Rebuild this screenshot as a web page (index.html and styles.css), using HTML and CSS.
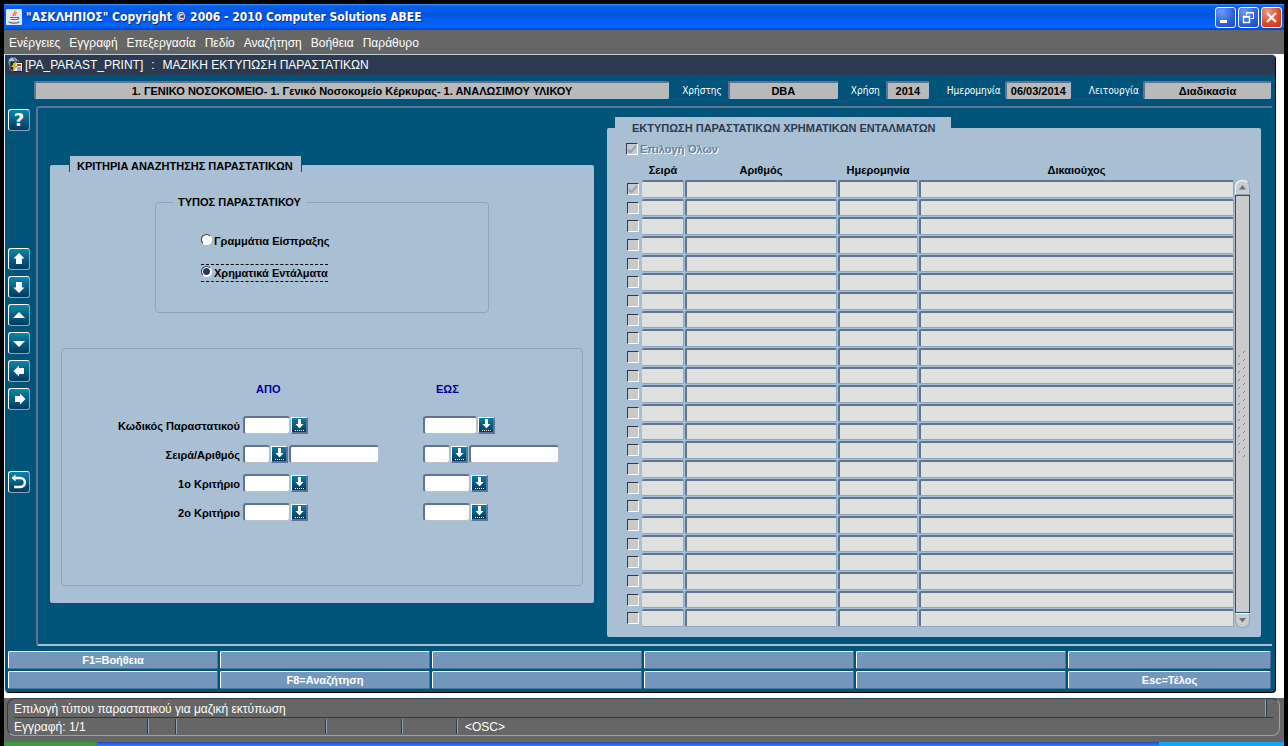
FILE: index.html
```
<!DOCTYPE html>
<html lang="el">
  <head>
    <meta charset="UTF-8" />
    <meta name="viewport" content="width=device-width, initial-scale=1.0" />
    <title>"ΑΣΚΛΗΠΙΟΣ"</title>
    <link rel="stylesheet" href="styles.css" />
  </head>
  <body>
    <div class="window">
      <header class="titlebar">
        <svg class="java" viewBox="0 0 16 16" width="16" height="16">
          <rect width="16" height="16" rx="1" fill="#e4e9ee" />
          <path d="M9 1.500c1 2-3 3-1.500 5.500M11 3.500c-2 1-2.500 2-1.500 3.500" fill="none" stroke="#e8772e" stroke-width="1.300" />
          <path d="M4 8.500h7M4.500 10.500h6M11 8.500c2.500-.5 2 2-.5 2" fill="none" stroke="#4c6f93" stroke-width="1.200" />
          <path d="M2.500 13c3 1.300 8 1.300 11 0" fill="none" stroke="#4c6f93" stroke-width="1.200" />
        </svg>
        <h1>"ΑΣΚΛΗΠΙΟΣ" Copyright © 2006 - 2010 Computer Solutions ABEE</h1>
        <div class="win-buttons">
          <button type="button" aria-label="Ελαχιστοποίηση">
            <svg viewBox="0 0 19 19"><path d="M4 12h7v3H4z" fill="#fff" /></svg>
          </button>
          <button type="button" aria-label="Επαναφορά">
            <svg viewBox="0 0 19 19">
              <path d="M7.500 7V4.500h7v6H12M7 5h8" fill="none" stroke="#fff" />
              <path d="M4.500 8.500h6v6h-6zM4 9h7" fill="none" stroke="#fff" stroke-width="1.400" />
            </svg>
          </button>
          <button type="button" class="close" aria-label="Κλείσιμο">
            <svg viewBox="0 0 19 19"><path d="M5 5l9 9M14 5l-9 9" stroke="#fff" stroke-width="2.200" /></svg>
          </button>
        </div>
      </header>

      <nav class="menu">
        <button type="button">Ενέργειες</button>
        <button type="button">Εγγραφή</button>
        <button type="button">Επεξεργασία</button>
        <button type="button">Πεδίο</button>
        <button type="button">Αναζήτηση</button>
        <button type="button">Βοήθεια</button>
        <button type="button">Παράθυρο</button>
      </nav>

      <div class="desktop">
        <div class="form">
          <div class="form-title">
            <svg viewBox="0 0 16 16" width="16" height="16">
              <circle cx="6" cy="5" r="5" fill="#4a6cc0" />
              <path d="M2 3l3-2 2 2-2 3zM7 1l3 2" fill="#9fc4d8" stroke="#9fc4d8" />
              <path d="M3 4h9v9H3z" fill="#1b2430" stroke="#c9d2dc" stroke-width=".5" />
              <path d="M5.500 5.500h10v9h-10z" fill="#f4f0e4" stroke="#222" />
              <path d="M10 7h4v2h-4z" fill="#c33" />
              <path d="M10 11h4M10 13h4" stroke="#3550b8" />
              <path d="M8 5l-4 5h3l-2 5 5-6H7l3-4z" fill="#f6d53a" stroke="#6b5a10" stroke-width=".5" />
            </svg>
            <span>[PA_PARAST_PRINT]</span>
            <span>:</span>
            <span>ΜΑΖΙΚΗ ΕΚΤΥΠΩΣΗ ΠΑΡΑΣΤΑΤΙΚΩΝ</span>
          </div>

          <div class="info">
            <input class="info-unit" type="text" readonly aria-label="Μονάδα" value="1. ΓΕΝΙΚΟ ΝΟΣΟΚΟΜΕΙΟ- 1. Γενικό Νοσοκομείο Κέρκυρας- 1. ΑΝΑΛΩΣΙΜΟΥ ΥΛΙΚΟΥ" />
            <label for="user">Χρήστης</label>
            <input class="info-user" id="user" type="text" readonly value="DBA" />
            <label for="year">Χρήση</label>
            <input class="info-year" id="year" type="text" readonly value="2014" />
            <label class="spaced" for="date">Ημερομηνία</label>
            <input class="info-date" id="date" type="text" readonly value="06/03/2014" />
            <label class="spaced" for="mode">Λειτουργία</label>
            <input class="info-mode" id="mode" type="text" readonly value="Διαδικασία" />
          </div>

          <div class="workspace">
            <div class="tools">
              <button type="button" class="tool help">?</button>
              <div class="tool-group">
                <button type="button" class="tool" aria-label="Πρώτη"><svg viewBox="0 0 18 18"><path d="M9 3l5.500 5.500H12V14H6V8.500H3.500z" /></svg></button>
                <button type="button" class="tool" aria-label="Τελευταία"><svg viewBox="0 0 18 18"><path d="M9 15L3.500 9.500H6V4h6v5.500h2.500z" /></svg></button>
                <button type="button" class="tool" aria-label="Προηγούμενη"><svg viewBox="0 0 18 18"><path d="M9 6l6 6H3z" /></svg></button>
                <button type="button" class="tool" aria-label="Επόμενη"><svg viewBox="0 0 18 18"><path d="M9 13L3 7h12z" /></svg></button>
                <button type="button" class="tool" aria-label="Αριστερά"><svg viewBox="0 0 18 18"><path d="M3.500 9L9 3.500V6h5v6H9v2.500z" /></svg></button>
                <button type="button" class="tool" aria-label="Δεξιά"><svg viewBox="0 0 18 18"><path d="M15.500 9L10 3.500V6H5v6h5v2.500z" /></svg></button>
              </div>
              <button type="button" class="tool" aria-label="Επιστροφή">
                <svg viewBox="0 0 18 18">
                  <path d="M1.500 5l4-3.500v7z" />
                  <path d="M4 5h6c6.500 0 6.500 9 0 9H4" fill="none" stroke="#fff" stroke-width="2.400" />
                </svg>
              </button>
            </div>

            <main class="canvas">
              <section class="panel criteria">
                <h2 class="tab">ΚΡΙΤΗΡΙΑ ΑΝΑΖΗΤΗΣΗΣ ΠΑΡΑΣΤΑΤΙΚΩΝ</h2>

                <fieldset class="doc-type">
                  <legend>ΤΥΠΟΣ ΠΑΡΑΣΤΑΤΙΚΟΥ</legend>
                  <label class="option"><input type="radio" name="doc" />Γραμμάτια Είσπραξης</label>
                  <label class="option selected"><input type="radio" name="doc" checked />Χρηματικά Εντάλματα</label>
                </fieldset>

                <div class="range">
                  <span></span>
                  <span class="range-head">ΑΠΟ</span>
                  <span class="range-head">ΕΩΣ</span>

                  <label for="code-from">Κωδικός Παραστατικού</label>
                  <div class="pair"><input id="code-from" class="field" type="text" /><button type="button" class="lov" aria-label="Λίστα"></button></div>
                  <div class="pair"><input class="field wide" type="text" aria-label="Κωδικός έως" /><button type="button" class="lov" aria-label="Λίστα"></button></div>

                  <label for="series-from">Σειρά/Αριθμός</label>
                  <div class="pair">
                    <input id="series-from" class="field short" type="text" /><button type="button" class="lov" aria-label="Λίστα"></button><input class="field long" type="text" aria-label="Αριθμός από" />
                  </div>
                  <div class="pair">
                    <input class="field short" type="text" aria-label="Σειρά έως" /><button type="button" class="lov" aria-label="Λίστα"></button><input class="field long" type="text" aria-label="Αριθμός έως" />
                  </div>

                  <label for="crit1-from">1ο Κριτήριο</label>
                  <div class="pair"><input id="crit1-from" class="field" type="text" /><button type="button" class="lov" aria-label="Λίστα"></button></div>
                  <div class="pair"><input class="field" type="text" aria-label="1ο Κριτήριο έως" /><button type="button" class="lov" aria-label="Λίστα"></button></div>

                  <label for="crit2-from">2ο Κριτήριο</label>
                  <div class="pair"><input id="crit2-from" class="field" type="text" /><button type="button" class="lov" aria-label="Λίστα"></button></div>
                  <div class="pair"><input class="field" type="text" aria-label="2ο Κριτήριο έως" /><button type="button" class="lov" aria-label="Λίστα"></button></div>
                </div>
              </section>

              <section class="panel results">
                <h2 class="tab">ΕΚΤΥΠΩΣΗ ΠΑΡΑΣΤΑΤΙΚΩΝ ΧΡΗΜΑΤΙΚΩΝ ΕΝΤΑΛΜΑΤΩΝ</h2>
                <label class="select-all"><input class="check" type="checkbox" checked disabled />Επιλογή Όλων</label>
                <div class="grid">
                  <table>
                    <thead>
                      <tr>
                        <th class="c-check"></th>
                        <th class="c-series">Σειρά</th>
                        <th class="c-number">Αριθμός</th>
                        <th class="c-date">Ημερομηνία</th>
                        <th>Δικαιούχος</th>
                      </tr>
                    </thead>
                    <tbody id="rows"></tbody>
                  </table>
                  <div class="scroll">
                    <button type="button" class="scroll-up" aria-label="Πάνω"><svg viewBox="0 0 8 5"><path d="M4 0l4 5H0z" /></svg></button>
                    <div class="scroll-track">
                      <svg width="9" height="108">
                        <defs>
                          <pattern id="grip" width="9" height="8" patternUnits="userSpaceOnUse">
                            <path d="M0 7l2-2M5 3l2-2" stroke="#71849c" />
                          </pattern>
                        </defs>
                        <rect width="9" height="108" fill="url(#grip)" />
                      </svg>
                    </div>
                    <button type="button" class="scroll-down" aria-label="Κάτω"><svg viewBox="0 0 8 5"><path d="M4 5L0 0h8z" /></svg></button>
                  </div>
                </div>
              </section>
            </main>
          </div>

          <div class="keys">
            <button type="button">F1=Βοήθεια</button>
            <button type="button"></button>
            <button type="button"></button>
            <button type="button"></button>
            <button type="button"></button>
            <button type="button"></button>
            <button type="button"></button>
            <button type="button">F8=Αναζήτηση</button>
            <button type="button"></button>
            <button type="button"></button>
            <button type="button"></button>
            <button type="button">Esc=Τέλος</button>
          </div>
        </div>
      </div>

      <footer class="status">
        <div class="status-box">
          <div class="status-message"><span>Επιλογή τύπου παραστατικού για μαζική εκτύπωση</span></div>
          <div class="status-cells">
            <span class="cell-record">Εγγραφή: 1/1</span>
            <span class="cell-a"></span>
            <span class="cell-b"></span>
            <span class="cell-c"></span>
            <span class="cell-d"></span>
            <span class="cell-osc">&lt;OSC&gt;</span>
          </div>
        </div>
      </footer>
      <div class="taskbar"><span class="start"></span><span class="tray"></span></div>
    </div>

    <script>
      const ROWS = 24;
      const rows = document.getElementById("rows");
      for (let i = 1; i <= ROWS; i++) {
        const tr = document.createElement("tr");
        tr.innerHTML = `
          <td class="c-check"><input class="check" type="checkbox" disabled aria-label="Επιλογή ${i}" ${i === 1 ? "checked" : ""} /></td>
          <td><input type="text" disabled aria-label="Σειρά ${i}" /></td>
          <td><input type="text" disabled aria-label="Αριθμός ${i}" /></td>
          <td><input type="text" disabled aria-label="Ημερομηνία ${i}" /></td>
          <td><input type="text" disabled aria-label="Δικαιούχος ${i}" /></td>`;
        rows.appendChild(tr);
      }
      // arrow on a dotted line, same for every list button
      document.querySelectorAll(".lov").forEach((b) => {
        b.innerHTML = `<svg viewBox="0 0 14 14"><path d="M6 1h3v5h2.500l-4 4.500-4-4.500H6z" fill="#fff"/><path d="M3 12.500h9" stroke="#fff" stroke-dasharray="1 1"/></svg>`;
      });
    </script>
  </body>
</html>
```
FILE: styles.css
```
* {
  margin: 0;
  padding: 0;
  box-sizing: border-box;
}
:root {
  --teal: #005379;
  --panel: #a9bfd3;
  --line: #5f7492;
  --edge: #8fa5be;
  --navy: #2b3a50;
  --grey: #666666;
}
body {
  background: #000;
  font-family: "Liberation Sans", Arial, sans-serif;
  font-size: 11px;
}
input,
button {
  font: inherit;
}
button {
  border: none;
  cursor: pointer;
}
svg {
  display: block;
}
.window {
  min-height: 100vh;
  padding: 4px 4px 0;
  display: flex;
  flex-direction: column;
}

/* title bar */
.titlebar {
  height: 26px;
  padding: 0 2px;
  display: flex;
  align-items: center;
  gap: 4px;
  background: linear-gradient(#3c8cf5 0, #0a5fe8 8%, #0054e3 40%, #0066ff 85%, #0046c8 100%);
}
.titlebar h1 {
  flex: 1;
  font: bold 12px "DejaVu Sans Condensed", sans-serif;
  color: #fff;
  text-shadow: 1px 1px 0 #0a2f86;
}
.win-buttons {
  display: flex;
  gap: 2px;
}
.win-buttons button {
  width: 21px;
  height: 21px;
  border: 1px solid #fff;
  border-radius: 3px;
  background: radial-gradient(circle at 30% 20%, #6f9bf2, #2a5fdd 60%, #1c4cc4);
}
.win-buttons .close {
  background: radial-gradient(circle at 30% 20%, #ee9a82, #dc5030 55%, #b8330f);
}

/* menu */
.menu {
  height: 24px;
  padding: 2px 5px 0;
  display: flex;
  align-items: center;
  gap: 9px;
  background: var(--grey);
}
.menu button {
  background: none;
  color: #fff;
  font-size: 12px;
}

/* form window */
.desktop {
  flex: 1;
  display: flex;
  padding: 0 9px 6px 0;
  background: #fff;
}
.form {
  flex: 1;
  min-width: 0;
  display: flex;
  flex-direction: column;
  background: var(--teal);
  border-top: 1px solid #c3cdd6;
  border-left: 1px solid #dfe8ee;
  border-radius: 0 4px 4px 4px;
  box-shadow: 1px 1px 0 #000;
}
.form-title {
  height: 20px;
  padding-left: 2px;
  display: flex;
  align-items: center;
  background: var(--navy);
  border-radius: 0 4px 0 0;
  color: #fff;
  font-size: 12px;
}
.form-title span {
  margin-right: 8px;
}
.form-title svg {
  margin-right: 2px;
}
.info {
  display: flex;
  align-items: center;
  padding: 6px 4px 7px 29px;
}
.info label {
  margin-left: 13px;
  margin-right: 6px;
  color: #fff;
  font: 10px "DejaVu Sans Condensed", sans-serif;
}
.info .spaced {
  margin-left: 18px;
  margin-right: 4px;
}
.info input {
  height: 18px;
  border: 2px solid var(--line);
  border-right: 1px solid var(--panel);
  border-bottom: 1px solid var(--panel);
  border-radius: 2px;
  background: #b9b9b9;
  color: #000;
  font-weight: bold;
  text-align: center;
  min-width: 0;
}
.info-unit {
  flex: 1;
}
.info-user {
  width: 110px;
}
.info-year {
  width: 43px;
}
.info-date {
  width: 66px;
}
.info-mode {
  width: 128px;
}
.workspace {
  flex: 1;
  display: flex;
}

/* left toolbar */
.tools {
  width: 31px;
  padding: 3px 0 0 3px;
}
.tool-group {
  display: flex;
  flex-direction: column;
  gap: 6px;
  margin: 117px 0 61px;
}
.tool {
  display: block;
  width: 22px;
  height: 22px;
  padding: 1px;
  border: 1px solid #fff;
  border-right-color: var(--edge);
  border-bottom-color: var(--edge);
  border-radius: 3px;
  background: linear-gradient(#0b86a8, #00395f);
  color: #fff;
}
.tool svg {
  fill: #fff;
}
.help {
  font: bold 18px/18px "DejaVu Sans", sans-serif;
}

.canvas {
  flex: 1;
  min-width: 0;
  margin-right: 3px;
  padding-right: 11px;
  display: flex;
  gap: 13px;
  border: 2px solid var(--line);
  border-right: none;
  border-bottom-color: var(--panel);
  border-radius: 3px 0 0 3px;
}
.panel {
  background: var(--panel);
  border-radius: 2px;
}
.tab {
  background: var(--panel);
  font-size: 11px;
}

/* criteria */
.criteria {
  flex: 544 1 0;
  margin: 57px 0 41px 12px;
  display: flex;
  flex-direction: column;
}
.criteria .tab {
  align-self: flex-start;
  height: 16px;
  margin: -9px 0 0 19px;
  padding: 0 8px 0 7px;
  line-height: 21px;
  border: solid var(--teal);
  border-width: 0 1px;
}
.doc-type {
  height: 117px;
  margin: 24px 105px 0;
  padding: 23px 0 0 45px;
  border: 1px solid var(--edge);
  border-radius: 4px;
}
.doc-type legend {
  margin-left: -28px;
  padding: 0 5px;
  line-height: 13px;
  font-weight: bold;
}
.option {
  display: flex;
  align-items: center;
  gap: 2px;
  width: max-content;
  height: 18px;
  margin-bottom: 14px;
  font-weight: bold;
}
.option input {
  width: 11px;
  height: 11px;
  margin-bottom: 3px;
  appearance: none;
  border: 1px solid #fff;
  border-top-color: var(--navy);
  border-left-color: var(--navy);
  border-radius: 50%;
  background: #fff;
}
.option input:checked {
  background: radial-gradient(circle, var(--navy) 3px, #fff 4px);
}
.selected {
  border: dashed #000;
  border-width: 1px 0;
}
.range {
  flex: 1;
  margin: 35px 11px 17px;
  padding-top: 34px;
  display: grid;
  grid-template-columns: 178px 177px 1fr;
  grid-template-rows: 22px;
  grid-auto-rows: 18px;
  align-content: start;
  gap: 11px 3px;
  border: 1px solid var(--edge);
  border-radius: 4px;
}
.range label {
  line-height: 20px;
  text-align: right;
  font-weight: bold;
}
.range-head {
  padding-left: 13px;
  color: #0000a0;
  font-weight: bold;
}
.pair {
  display: flex;
  gap: 1px;
}
.field {
  width: 47px;
  height: 18px;
  border: 2px solid var(--line);
  border-right: 1px solid #b9c2cc;
  border-bottom: 1px solid #b9c2cc;
  border-radius: 3px;
  background: #fff;
}
.short {
  width: 27px;
}
.wide {
  width: 54px;
}
.long {
  width: 90px;
}
.lov {
  width: 17px;
  height: 17px;
  margin-top: 1px;
  border: 1px solid #fff;
  border-right: 2px solid var(--line);
  border-bottom: 2px solid var(--line);
  background: linear-gradient(#0b7fa2, #00395f);
}

/* results */
.results {
  flex: 624 1 0;
  align-self: flex-start;
  margin: 20px 0 7px;
  padding: 0 11px 9px 19px;
}
.results .tab {
  width: max-content;
  height: 18px;
  margin: -11px 0 0 -11px;
  padding: 0 16px 0 17px;
  line-height: 22px;
  color: var(--navy);
}
.select-all {
  display: flex;
  align-items: center;
  gap: 2px;
  height: 16px;
  margin-top: 6px;
  color: #6b7f9a;
  font-weight: bold;
  text-shadow: 1px 1px 0 #fff;
}
.check {
  display: block;
  width: 12px;
  height: 12px;
  appearance: none;
  border: 1px solid #fff;
  border-top-color: var(--navy);
  border-left-color: var(--navy);
  background: #c9c9c9;
}
.check:checked::before {
  content: "";
  display: block;
  width: 10px;
  height: 10px;
  background: var(--edge);
  clip-path: polygon(10% 45%, 35% 65%, 90% 5%, 90% 35%, 35% 95%, 10% 75%);
}
.grid {
  display: flex;
  margin-top: 3px;
}
table {
  flex: 1;
  table-layout: fixed;
  border-spacing: 1px;
}
th {
  height: 18px;
  vertical-align: middle;
  font-size: 11px;
}
.c-check {
  width: 14px;
}
.c-series {
  width: 42px;
}
.c-number {
  width: 152px;
}
.c-date {
  width: 80px;
}
td {
  height: 18px;
  border: 2px solid var(--line);
  border-right: 1px solid var(--edge);
  border-bottom: 1px solid var(--edge);
  border-radius: 2px;
  background: #dee1de;
}
tr:nth-child(3n + 2) td {
  height: 17px;
}
td:nth-child(2) {
  border-left: none;
}
td.c-check {
  border: none;
  background: none;
}
td input[type="text"] {
  display: block;
  width: 100%;
  height: 13px;
  border: none;
  background: none;
}
.scroll {
  width: 15px;
  margin-top: 20px;
  display: flex;
  flex-direction: column;
}
.scroll button {
  height: 15px;
  padding: 0 3px;
  background: #cdcdcd;
  border: 1px solid var(--edge);
}
.scroll button svg {
  width: 7px;
  fill: var(--line);
}
.scroll .scroll-up {
  border-top-color: #fff;
  border-left-color: #fff;
  border-radius: 7px 7px 0 0;
}
.scroll .scroll-down {
  border-top-color: #fff;
  border-radius: 0 0 7px 7px;
}
.scroll-track {
  flex: 1;
  display: flex;
  align-items: center;
  justify-content: center;
  border: 1px solid #1c5574;
  background: #cbcbcb;
}

/* function keys */
.keys {
  display: grid;
  grid-template-columns: repeat(5, 210fr) 203fr;
  grid-auto-rows: 18px;
  gap: 2px;
  padding: 5px 4px 3px 3px;
}
.keys button {
  border: 1px solid #fff;
  border-right-color: #4f7397;
  border-bottom-color: #4f7397;
  border-radius: 2px;
  background: #7397bb;
  color: #fff;
  font-weight: bold;
}

/* status line */
.status {
  height: 44px;
  padding: 0 4px 6px 3px;
  background: var(--grey);
  color: #fff;
  font-size: 12px;
}
.status-box {
  height: 38px;
  padding: 0 6px;
  border: 1px solid var(--edge);
  border-top-color: var(--navy);
  border-left-color: var(--navy);
  border-radius: 8px;
}
.status-message {
  display: flex;
  justify-content: space-between;
  height: 19px;
  padding-right: 6px;
  border-bottom: 1px solid var(--navy);
  line-height: 20px;
}
.status-message::after {
  content: "";
  border-left: 1px solid var(--edge);
  border-right: 1px solid var(--navy);
}
.status-cells {
  display: flex;
  height: 15px;
  margin-top: 1px;
  line-height: 16px;
}
.status-cells span + span {
  border-left: 1px solid var(--navy);
  box-shadow: inset 1px 0 0 var(--edge);
}
.cell-record {
  width: 133px;
}
.cell-a {
  width: 28px;
}
.cell-b {
  width: 150px;
}
.cell-c {
  width: 76px;
}
.cell-d {
  width: 55px;
}
.cell-osc {
  padding-left: 8px;
}
.taskbar {
  display: flex;
  justify-content: space-between;
  height: 4px;
  background: linear-gradient(#1c4fb8, #3a80ee);
}
.start {
  width: 94px;
  background: #3f9a3f;
  border-radius: 0 4px 0 0;
}
.tray {
  width: 125px;
  background: #18a4f0;
}
```
